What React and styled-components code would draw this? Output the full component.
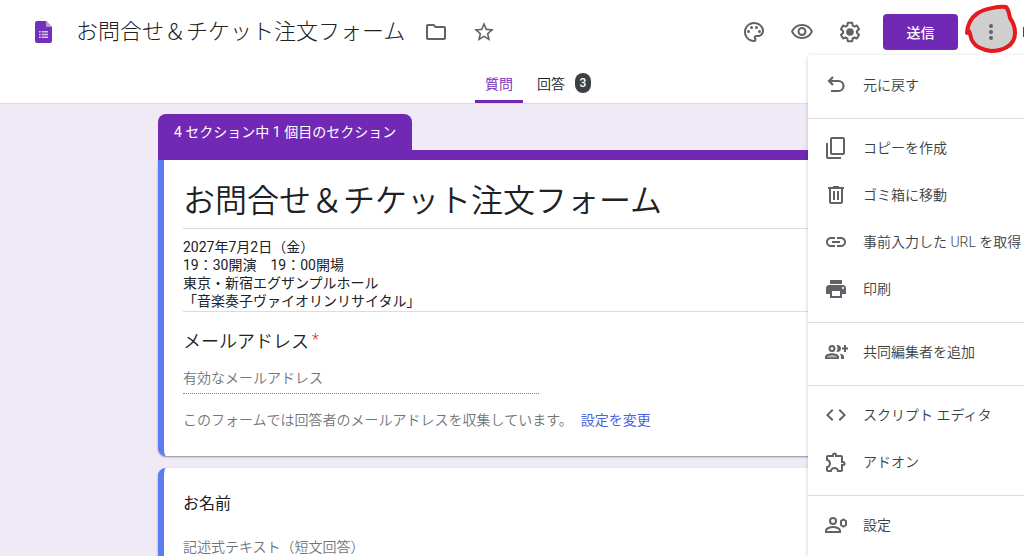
import React from "react"
import styled, { createGlobalStyle } from "styled-components"
import {
  MdOutlineFolder,
  MdStarOutline,
  MdOutlinePalette,
  MdOutlineVisibility,
  MdLink,
  MdPrint,
  MdCode,
  MdOutlineExtension,
} from "react-icons/md"

const GlobalStyle = createGlobalStyle`
  * {
    box-sizing: border-box;
  }

  body {
    margin: 0;
    background: #f0eaf7;
    color: #202124;
    font-family: Roboto, "Noto Sans CJK JP", sans-serif;
    font-size: 14px;
    font-weight: 350;
    overflow: hidden;
  }

  button,
  input {
    font: inherit;
    color: inherit;
    border: 0;
    padding: 0;
    background: none;
  }

  button {
    cursor: pointer;
  }

  svg {
    display: block;
    flex: none;
  }
`

const menuGroups = [
  [{ label: "元に戻す", icon: <UndoIcon /> }],
  [
    { label: "コピーを作成", icon: <CopyIcon /> },
    { label: "ゴミ箱に移動", icon: <TrashIcon /> },
    { label: "事前入力した URL を取得", icon: <MdLink size={24} /> },
    { label: "印刷", icon: <MdPrint size={24} /> },
  ],
  [{ label: "共同編集者を追加", icon: <AddPeopleIcon /> }],
  [
    { label: "スクリプト エディタ", icon: <MdCode size={24} /> },
    { label: "アドオン", icon: <MdOutlineExtension size={24} /> },
  ],
  [{ label: "設定", icon: <PersonSettingsIcon /> }],
]

export default function App() {
  return (
    <Page>
      <GlobalStyle />
      <Header>
        <TopBar>
          <FormsLogo />
          <DocTitle>お問合せ＆チケット注文フォーム</DocTitle>
          <IconButton aria-label="フォルダに移動">
            <MdOutlineFolder size={24} />
          </IconButton>
          <IconButton aria-label="スターを付ける">
            <MdStarOutline size={24} />
          </IconButton>
          <Actions>
            <IconButton aria-label="テーマをカスタマイズ">
              <MdOutlinePalette size={24} />
            </IconButton>
            <IconButton aria-label="プレビュー">
              <MdOutlineVisibility size={24} />
            </IconButton>
            <IconButton aria-label="設定">
              <GearIcon />
            </IconButton>
            <SendButton>送信</SendButton>
            <MoreArea>
              <RedCircle />
              <MoreButton aria-label="その他">
                <DotsIcon />
              </MoreButton>
              <Menu>
                {menuGroups.map((group, i) => (
                  <MenuGroup key={i}>
                    {group.map(item => (
                      <MenuItem key={item.label}>
                        {item.icon}
                        {item.label}
                      </MenuItem>
                    ))}
                  </MenuGroup>
                ))}
              </Menu>
            </MoreArea>
            <Avatar />
          </Actions>
        </TopBar>
        <Tabs>
          <Tab $active>質問</Tab>
          <Tab>
            回答 <Count>3</Count>
          </Tab>
        </Tabs>
      </Header>

      <Main>
        <section>
          <SectionTab>4 セクション中 1 個目のセクション</SectionTab>
          <SectionBar />
          <Card $first>
            <FormTitle>お問合せ＆チケット注文フォーム</FormTitle>
            <Description>
              2027年7月2日（金）
              <br />
              19：30開演　19：00開場
              <br />
              東京・新宿エグザンプルホール
              <br />
              「音楽奏子ヴァイオリンリサイタル」
            </Description>
            <EmailLabel htmlFor="email">
              メールアドレス<Required>*</Required>
            </EmailLabel>
            <TextInput
              id="email"
              type="email"
              placeholder="有効なメールアドレス"
            />
            <Note>
              このフォームでは回答者のメールアドレスを収集しています。
              <a href="#settings">設定を変更</a>
            </Note>
          </Card>
        </section>
        <Card>
          <QuestionLabel htmlFor="name">お名前</QuestionLabel>
          <TextInput
            id="name"
            type="text"
            placeholder="記述式テキスト（短文回答）"
          />
        </Card>
      </Main>
    </Page>
  )
}

// Icons
function FormsLogo() {
  return (
    <svg width="17" height="22" viewBox="0 0 17 22">
      <path
        fill="#7330be"
        d="M2 0h9l6 6v14a2 2 0 0 1-2 2H2a2 2 0 0 1-2-2V2a2 2 0 0 1 2-2z"
      />
      <path fill="#b89add" d="M11 0l6 6h-4.500a1.500 1.500 0 0 1-1.500-1.500z" />
      <path
        fill="#d9c6f0"
        d="M4 10h1.600v1.500H4zM6.600 10H13v1.500H6.600zM4 12.800h1.600v1.500H4zM6.600 12.800H13v1.500H6.600zM4 15.600h1.600v1.500H4zM6.600 15.600H13v1.500H6.600z"
      />
    </svg>
  )
}

function GearIcon() {
  return (
    <svg width="24" height="24" viewBox="0 0 24 24" fill="currentColor">
      <path d="M13.850 22.250h-3.700c-.74 0-1.360-.54-1.450-1.270l-.27-1.890c-.27-.14-.53-.29-.79-.46l-1.800.72c-.7.26-1.470-.03-1.810-.65L2.200 15.530c-.35-.66-.2-1.440.36-1.880l1.530-1.190c-.01-.15-.02-.3-.02-.46 0-.15.010-.31.020-.46l-1.520-1.190c-.59-.45-.74-1.260-.37-1.880l1.850-3.190c.34-.62 1.110-.9 1.790-.63l1.810.73c.26-.17.520-.32.780-.46l.27-1.910c.09-.7.710-1.250 1.440-1.250h3.700c.74 0 1.360.54 1.450 1.270l.27 1.890c.27.14.53.29.79.46l1.800-.72c.71-.26 1.480.03 1.820.65l1.840 3.180c.36.66.2 1.440-.36 1.880l-1.520 1.190c.01.15.020.3.020.46s-.01.31-.02.46l1.520 1.190c.56.45.72 1.230.37 1.860l-1.860 3.220c-.34.62-1.110.9-1.800.63l-1.800-.72c-.26.17-.52.32-.78.46l-.27 1.910c-.1.68-.72 1.220-1.460 1.220zm-3.230-2h2.760l.37-2.550.53-.22c.44-.18.88-.44 1.340-.78l.45-.34 2.380.96 1.380-2.400-2.030-1.580.07-.56c.03-.26.060-.51.060-.78s-.03-.53-.06-.78l-.07-.56 2.030-1.580-1.390-2.400-2.390.96-.45-.35c-.42-.32-.87-.58-1.330-.77l-.52-.22-.37-2.550h-2.760l-.37 2.550-.53.21c-.44.19-.88.44-1.340.79l-.45.33-2.380-.95-1.390 2.390 2.030 1.580-.07.56a7 7 0 0 0-.06.79c0 .26.020.53.060.78l.07.56-2.030 1.580 1.380 2.400 2.390-.96.45.35c.43.33.86.58 1.330.77l.53.22.38 2.550z" />
      <circle cx="12" cy="12" r="3.800" />
    </svg>
  )
}

function DotsIcon() {
  return (
    <svg width="24" height="24" viewBox="0 0 24 24" fill="#5f6368">
      <circle cx="12" cy="6" r="2" />
      <circle cx="12" cy="12" r="2" />
      <circle cx="12" cy="18" r="2" />
    </svg>
  )
}

function UndoIcon() {
  return (
    <svg width="24" height="24" viewBox="0 0 24 24" fill="none">
      <path
        stroke="currentColor"
        strokeWidth="2.200"
        d="M9 4L5 8l4 4M5 8h9.500a4.700 4.700 0 0 1 0 10H7"
      />
    </svg>
  )
}

function CopyIcon() {
  return (
    <svg width="24" height="24" viewBox="0 0 24 24" fill="none">
      <g stroke="currentColor" strokeWidth="2">
        <rect x="7" y="2" width="13" height="16" rx="1" />
        <path d="M3 7v14a1 1 0 0 0 1 1h13" />
      </g>
    </svg>
  )
}

function TrashIcon() {
  return (
    <svg width="24" height="24" viewBox="0 0 24 24" fill="currentColor">
      <path d="M15 4V3H9v1H4v2h1v13c0 1.100.9 2 2 2h10c1.100 0 2-.9 2-2V6h1V4h-5zm2 15H7V6h10v13zM9 8h2v9H9zm4 0h2v9h-2z" />
    </svg>
  )
}

function AddPeopleIcon() {
  return (
    <svg width="24" height="24" viewBox="0 0 24 24" fill="currentColor">
      <path d="M20 5h2v2.500h2v2h-2V12h-2V9.500h-2v-2h2z" />
      <path
        fillRule="evenodd"
        d="M8 5a3.500 3.500 0 1 1 0 7 3.500 3.500 0 0 1 0-7zm0 2a1.500 1.500 0 1 0 0 3 1.500 1.500 0 0 0 0-3z"
      />
      <path
        fillRule="evenodd"
        d="M1 19v-2.300C1 14.300 5.200 13.200 8 13.200s7 1.100 7 3.500V19zM3 17.300h10c-.4-1.200-3-2.100-5-2.100s-4.600.9-5 2.100z"
      />
      <path fillOpacity="0.500" d="M3 17.300c.4-1.200 3-2.100 5-2.100s4.600.9 5 2.100z" />
      <path d="M12.500 5.100c2.500-.4 4.500 1.100 4.500 3.400s-2 3.800-4.500 3.400c1.400-2 1.400-4.800 0-6.800zM15.500 13.500c2.500.4 4.500 1.500 4.500 3.200V19h-3v-2.300c0-1.300-.5-2.300-1.500-3.200z" />
    </svg>
  )
}

function PersonSettingsIcon() {
  return (
    <svg width="24" height="24" viewBox="0 0 24 24" fill="none">
      <g stroke="currentColor" strokeWidth="2">
        <circle cx="9" cy="8" r="3" />
        <path d="M2 19v-1.500c0-2 4-3.500 7-3.500s7 1.500 7 3.500V19z" />
        <path d="M19.500 6.500l2.500 1.500v4l-2.500 1.500L17 12V8z" />
      </g>
    </svg>
  )
}

// Hand drawn marker around the menu button
function RedCircle() {
  return (
    <Marker width="60" height="56" viewBox="0 0 60 56">
      <path
        fill="#cfcfcf"
        stroke="#e5191e"
        strokeWidth="4"
        strokeLinecap="round"
        strokeLinejoin="round"
        d="M6 31C6 25 9 16 17 11C23 7 38 4 45 5C48 8 48 12 49 16C52 20 54 25 54 31C54 38 51 42 46 45C41 48 36 49 30 49C23 48 15 45 12 40C9 37 10 32 8 29"
      />
    </Marker>
  )
}

// Layout
const Page = styled.div`
  height: 100vh;
  overflow: hidden;
`

const Header = styled.header`
  height: 104px;
  background: #fff;
  border-bottom: 1px solid #dadce0;
`

const TopBar = styled.div`
  display: flex;
  align-items: center;
  height: 63px;
  padding-left: 35px;
`

const DocTitle = styled.h1`
  margin: 0 7px 0 24px;
  font-size: 22px;
  font-weight: 300;
  line-height: 32px;
  white-space: nowrap;
`

const IconButton = styled.button`
  display: grid;
  place-items: center;
  flex: none;
  width: 48px;
  height: 48px;
  color: #5f6368;
`

const Actions = styled.div`
  display: flex;
  align-items: center;
  margin-left: auto;
`

const SendButton = styled.button`
  flex: none;
  width: 75px;
  height: 36px;
  margin: 0 9px;
  border-radius: 4px;
  background: #7129b5;
  color: #fff;
  font-weight: 500;
`

const MoreArea = styled.div`
  position: relative;
  flex: none;
  margin-right: 8px;
`

const MoreButton = styled(IconButton)`
  position: relative;
`

const Marker = styled.svg`
  position: absolute;
  top: -6px;
  left: -6px;
  pointer-events: none;
`

const Avatar = styled.div`
  flex: none;
  width: 1px;
  height: 10px;
  background: #2c4a7c;
`

const Menu = styled.div`
  position: absolute;
  top: 47px;
  right: -9px;
  width: 216px;
  padding-top: 1px;
  background: #fff;
  border-radius: 4px 0 0 4px;
  box-shadow: 0 1px 4px rgba(0, 0, 0, 0.2);
`

const MenuGroup = styled.div`
  padding: 5px 0 10px;

  & + & {
    border-top: 1px solid #dadce0;
  }
`

const MenuItem = styled.button`
  display: flex;
  align-items: center;
  gap: 15px;
  width: 100%;
  height: 47px;
  padding-left: 16px;
  color: #3c4043;
  white-space: nowrap;

  svg {
    margin-top: 2px;
    color: #5f6368;
  }
`

const Tabs = styled.nav`
  display: flex;
  gap: 4px;
  height: 40px;
  padding-left: 475px;
`

const Tab = styled.button`
  display: flex;
  align-items: center;
  gap: 10px;
  height: 40px;
  padding: 3px 10px 0;
  color: ${props => (props.$active ? "#7129b5" : "#202124")};
  border-bottom: 3px solid ${props => (props.$active ? "#7129b5" : "#fff")};
  border-radius: 3px 3px 0 0;
`

const Count = styled.span`
  width: 16px;
  border-radius: 8px;
  background: #3c4043;
  color: #fff;
  font-size: 12px;
  font-weight: 500;
  line-height: 20px;
`

const Main = styled.main`
  display: grid;
  gap: 12px;
  max-width: 928px;
  padding: 10px 0 0 158px;
`

const SectionTab = styled.div`
  width: fit-content;
  height: 36px;
  padding: 0 16px;
  border-radius: 8px 8px 0 0;
  background: #7129b5;
  color: #fff;
  font-weight: 400;
  line-height: 36px;
`

const SectionBar = styled.div`
  height: 10px;
  border-radius: 0 8px 0 0;
  background: #7129b5;
`

const Card = styled.div`
  padding: 20px 20px 26px 19px;
  background: #fff;
  border-left: 6px solid #5b7cf0;
  border-radius: ${props => (props.$first ? "0 0 8px 8px" : "8px")};
  box-shadow: 0 1px 2px rgba(0, 0, 0, 0.4);
`

const FormTitle = styled.h2`
  margin: 0;
  padding-bottom: 6px;
  border-bottom: 1px solid #dadce0;
  font-size: 32px;
  font-weight: 350;
  line-height: 42px;
  white-space: nowrap;
`

const Description = styled.p`
  margin: 0;
  padding: 9px 0 1px;
  border-bottom: 1px solid #dadce0;
  font-weight: 400;
  line-height: 18px;
`

const EmailLabel = styled.label`
  display: block;
  margin-top: 18px;
  font-size: 18px;
  line-height: 24px;
`

const Required = styled.span`
  padding-left: 3px;
  color: #d93025;
  font-size: 16px;
  vertical-align: 3px;
  line-height: 16px;
`

const QuestionLabel = styled.label`
  display: block;
  padding-bottom: 3px;
  font-size: 16px;
  font-weight: 400;
  line-height: 32px;
`

const TextInput = styled.input`
  display: block;
  width: 356px;
  height: 32px;
  margin-top: 8px;
  border-bottom: 1px dotted #80868b;

  &::placeholder {
    color: #70757a;
    opacity: 1;
  }
`

const Note = styled.p`
  display: flex;
  gap: 8px;
  margin: 16px 0 0;
  color: #70757a;
  line-height: 20px;
  white-space: nowrap;

  a {
    color: #4a63e0;
    font-weight: 400;
    text-decoration: none;
  }
`
